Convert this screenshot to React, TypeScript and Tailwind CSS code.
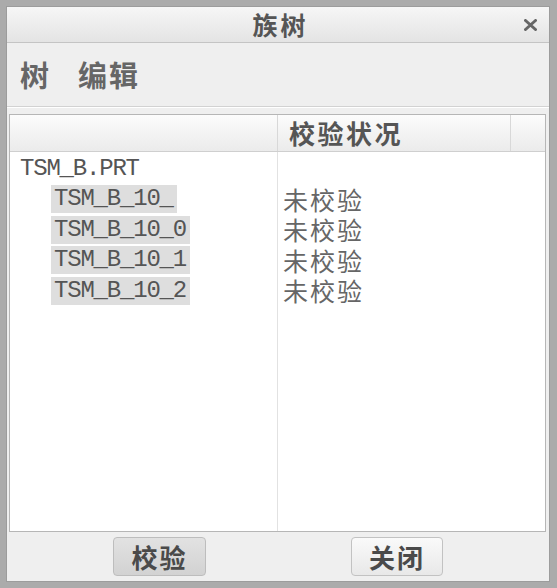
export default function App() {
  const cjk = "font-['Noto_Sans_CJK_SC','Noto_Sans',sans-serif]";
  const mono = "font-['Liberation_Mono',monospace]";
  const children = ["TSM_B_10_", "TSM_B_10_0", "TSM_B_10_1", "TSM_B_10_2"];
  return (
    <div className="w-[557px] h-[588px] bg-[#ababab] pt-[6px] pl-[6px] pr-[7px] pb-[6px]">
      <div className={`w-full h-full bg-[#efefef] flex flex-col border border-[#9c9c9c] ${cjk}`}>
        {/* title bar */}
        <div className="h-[36px] shrink-0 flex items-center bg-gradient-to-b from-[#f6f6f6] to-[#e4e4e4] border-b border-[#c4c4c4]">
          <div className="flex-1 flex justify-center pl-[30px]">
            <span className="text-[25px] leading-none font-bold text-[#555] tracking-[3px]">族树</span>
          </div>
          <svg className="mr-[12px]" width="13" height="12" viewBox="0 0 13 12">
            <path d="M1.5 1.5 L11.5 10.5 M11.5 1.5 L1.5 10.5" stroke="#666" strokeWidth="3" strokeLinecap="round" />
          </svg>
        </div>
        {/* menu bar */}
        <div className="h-[64px] shrink-0 flex items-center pl-[13px] gap-[29px] border-b border-[#d2d2d2]">
          <span className="text-[29px] leading-none font-bold text-[#666]">树</span>
          <span className="text-[29px] leading-none font-bold text-[#666] tracking-[2px]">编辑</span>
        </div>
        <div className="h-[1px] bg-white shrink-0" />
        {/* panel */}
        <div className="mt-[6px] ml-[2px] mr-[3px] h-[418px] shrink-0 bg-white border border-[#b6b6b6] flex flex-col">
          <div className="h-[37px] shrink-0 flex bg-gradient-to-b from-[#fcfcfc] to-[#ebebeb] border-b border-[#cfcfcf]">
            <div className="w-[268px] border-r border-[#d8d8d8]" />
            <div className="w-[233px] border-r border-[#d8d8d8] flex items-center pl-[11px]">
              <span className="text-[26px] leading-none font-bold text-[#555] tracking-[2.5px]">校验状况</span>
            </div>
            <div className="flex-1" />
          </div>
          <div className="flex-1 flex">
            <div className="w-[268px] border-r border-[#e2e2e2] flex flex-col">
              <div className={`h-[33px] flex items-center pl-[10px] text-[24px] leading-none text-[#555] tracking-[-1.2px] ${mono}`}>TSM_B.PRT</div>
              {children.map((c) => (
                <div key={c} className="h-[28px] mb-[2.5px] flex items-center pl-[41px]">
                  <span className={`h-[28px] flex items-center bg-[#dedede] pl-[3px] pr-[4px] text-[24px] leading-none text-[#555] tracking-[-1.2px] ${mono}`}>{c}</span>
                </div>
              ))}
            </div>
            <div className="flex-1 flex flex-col pl-[5px]">
              <div className="h-[33px]" />
              {children.map((c) => (
                <div key={c} className="h-[28px] mb-[2.5px] flex items-center text-[25px] leading-none text-[#666] tracking-[2px]">未校验</div>
              ))}
            </div>
          </div>
        </div>
        {/* buttons */}
        <div className="flex-1 flex items-center pl-[106px]">
          <button className="w-[93px] h-[39px] rounded-[4px] border border-[#bdbdbd] bg-gradient-to-b from-[#e2e2e2] to-[#d2d2d2] text-[26px] leading-none font-bold text-[#4a4a4a] tracking-[2px] flex items-center justify-center">校验</button>
          <button className="ml-[145px] w-[92px] h-[39px] rounded-[4px] border border-[#c2c2c2] bg-gradient-to-b from-[#fafafa] to-[#e8e8e8] text-[26px] leading-none font-bold text-[#4a4a4a] tracking-[2px] flex items-center justify-center">关闭</button>
        </div>
      </div>
    </div>
  );
}
